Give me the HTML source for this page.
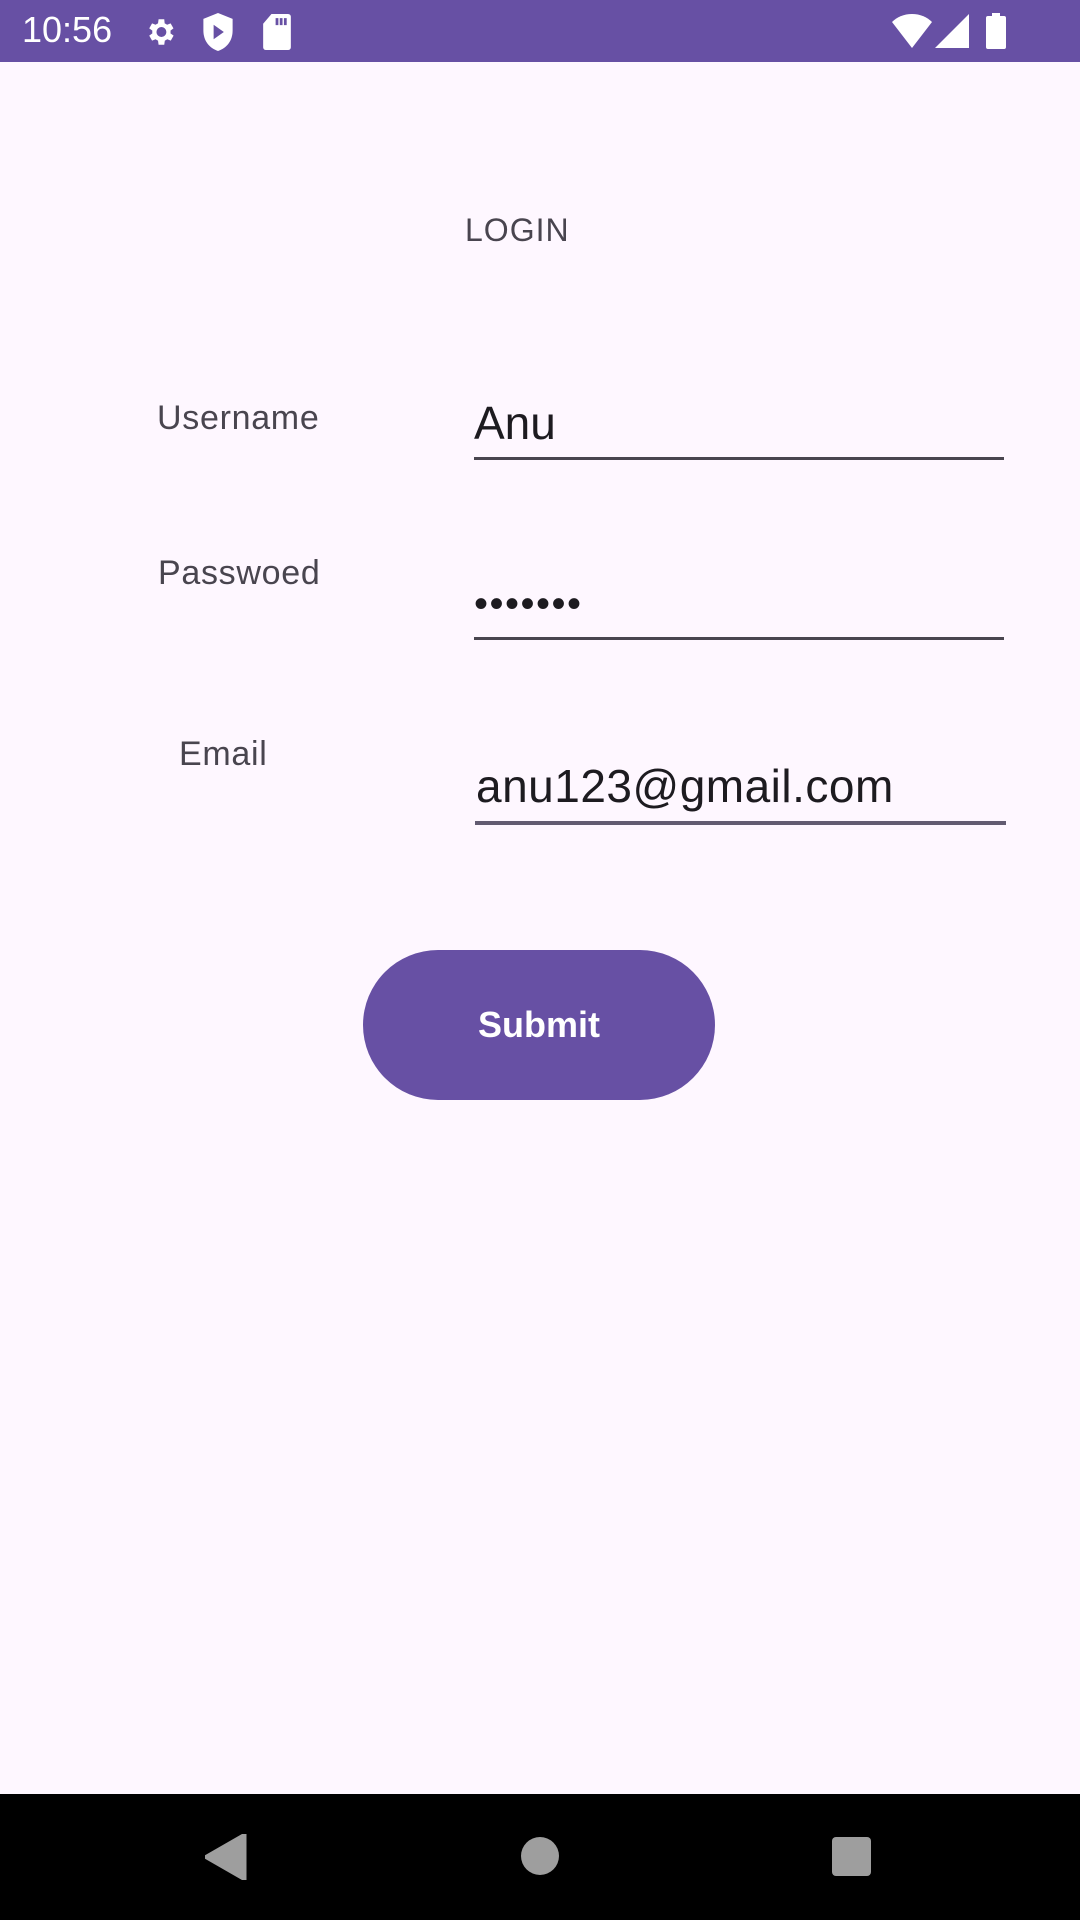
<!DOCTYPE html>
<html><head><meta charset="utf-8"><style>
html,body{margin:0;padding:0}
body{width:1080px;height:1920px;background:#FEF7FF;position:relative;overflow:hidden;font-family:"Liberation Sans",Roboto,sans-serif}
.abs{position:absolute}
.sb{left:0;top:0;width:1080px;height:62px;background:#6750A4}
.lbl{color:#49454F;font-size:34px;line-height:1;letter-spacing:0.7px}
.val{color:#1D1B20;font-size:46px;line-height:1}
.line{height:3px;background:#49454F}
</style></head><body>
<div class="abs sb">
 <div class="abs" style="left:22px;top:12px;color:#fff;font-size:36px;line-height:1">10:56</div>
 <svg class="abs" style="left:143px;top:15px" width="34" height="34" viewBox="0 0 24 24"><path fill="#fff" d="M19.4 13a7.5 7.5 0 000-2l2.1-1.6-2-3.5-2.5 1a7.6 7.6 0 00-1.7-1L15 3h-4l-.4 2.9a7.6 7.6 0 00-1.7 1l-2.5-1-2 3.5L6.6 11a7.5 7.5 0 000 2l-2.2 1.6 2 3.5 2.5-1a7.6 7.6 0 001.7 1L11 21h4l.4-2.9a7.6 7.6 0 001.7-1l2.5 1 2-3.5zM13 15.5a3.5 3.5 0 110-7 3.5 3.5 0 010 7z"/></svg>
 <svg class="abs" style="left:203px;top:13px" width="30" height="38" viewBox="0 0 20 26"><path fill="#fff" d="M10 0L0 4v8c0 7 4 12 10 14 6-2 10-7 10-14V4z"/><path fill="#6750A4" d="M7 8v10l7-5z"/></svg>
 <svg class="abs" style="left:263px;top:14px" width="28" height="36" viewBox="0 0 20 26"><path fill="#fff" d="M6 0h12a2 2 0 012 2v22a2 2 0 01-2 2H2a2 2 0 01-2-2V7z"/><path fill="#6750A4" d="M9 3h2v5H9zM12 3h2v5h-2zM15 3h2v5h-2z"/></svg>
 <svg class="abs" style="left:892px;top:14px" width="40" height="34" viewBox="0 0 40 34"><path fill="#fff" d="M20 34L0 8C5 3 12 0 20 0s15 3 20 8z"/></svg>
 <svg class="abs" style="left:935px;top:14px" width="34" height="34" viewBox="0 0 34 34"><path fill="#fff" d="M34 0v34H0z"/></svg>
 <svg class="abs" style="left:986px;top:13px" width="20" height="36" viewBox="0 0 20 36"><path fill="#fff" d="M6 0h8v3h4a2 2 0 012 2v29a2 2 0 01-2 2H2a2 2 0 01-2-2V5a2 2 0 012-2h4z"/></svg>
</div>
<div class="abs" style="left:465px;top:214px;color:#49454F;font-size:32px;line-height:1;letter-spacing:1px">LOGIN</div>

<div class="abs lbl" style="left:157px;top:401px">Username</div>
<div class="abs val" style="left:474px;top:400px">Anu</div>
<div class="abs line" style="left:474px;top:457px;width:530px"></div>

<div class="abs lbl" style="left:158px;top:556px">Passwoed</div>
<div class="abs val" style="left:474px;top:584px;font-size:40px;letter-spacing:1.5px">•••••••</div>
<div class="abs line" style="left:474px;top:637px;width:530px"></div>

<div class="abs lbl" style="left:179px;top:737px">Email</div>
<div class="abs val" style="left:476px;top:763px;letter-spacing:0.5px">anu123@gmail.com</div>
<div class="abs" style="left:475px;top:821px;width:531px;height:4px;background:#625B71"></div>

<div class="abs" style="left:363px;top:950px;width:352px;height:150px;border-radius:75px;background:#6750A4;color:#fff;font-weight:bold;font-size:36px;display:flex;align-items:center;justify-content:center">Submit</div>

<div class="abs" style="left:0;top:1794px;width:1080px;height:126px;background:#000">
 <svg class="abs" style="left:205px;top:40px" width="42" height="46" viewBox="0 0 42 46"><path fill="#9e9e9e" d="M40 0v46L0 23z" stroke="#9e9e9e" stroke-linejoin="round" stroke-width="3"/></svg>
 <div class="abs" style="left:521px;top:43px;width:38px;height:38px;border-radius:50%;background:#9e9e9e"></div>
 <div class="abs" style="left:832px;top:43px;width:39px;height:39px;border-radius:4px;background:#9e9e9e"></div>
</div>
</body></html>
